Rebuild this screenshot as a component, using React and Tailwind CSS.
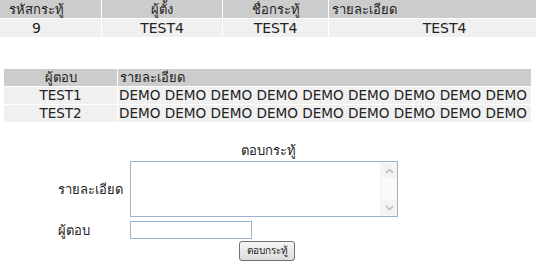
export default function App() {
  const font = { fontFamily: "Tahoma, 'DejaVu Sans', 'Noto Sans', sans-serif" };
  const demo = Array(9).fill("DEMO").join(" ");
  return (
    <div className="w-[536px] h-[263px] bg-white text-[#222] overflow-hidden relative" style={font}>
      {/* top table */}
      <div className="grid grid-cols-[101px_120px_105px_1fr] gap-x-px gap-y-px w-[536px] text-[13px]">
        <div className="h-[18px] bg-[#cccccc] flex items-center justify-center pr-[28px] leading-none">รหัสกระทู้</div>
        <div className="h-[18px] bg-[#cccccc] flex items-center justify-center leading-none">ผู้ตั้ง</div>
        <div className="h-[18px] bg-[#cccccc] flex items-center justify-center leading-none">ชื่อกระทู้</div>
        <div className="h-[18px] bg-[#cccccc] flex items-center pl-[3px] leading-none">รายละเอียด</div>
        <div className="h-[18px] bg-[#f0f0f0] flex items-center justify-center pr-[28px] text-[14px] leading-none">9</div>
        <div className="h-[18px] bg-[#f0f0f0] flex items-center justify-center text-[14px] leading-none">TEST4</div>
        <div className="h-[18px] bg-[#f0f0f0] flex items-center justify-center text-[14px] leading-none">TEST4</div>
        <div className="h-[18px] bg-[#f0f0f0] flex items-center justify-center pl-6 text-[14px] leading-none">TEST4</div>
      </div>

      {/* second table */}
      <div className="mt-[32px] ml-[4px] w-[527px] grid grid-cols-[113px_1fr] gap-px text-[13px]">
        <div className="h-[17px] bg-[#cccccc] flex items-center justify-center leading-none">ผู้ตอบ</div>
        <div className="h-[17px] bg-[#cccccc] flex items-center pl-[2px] leading-none">รายละเอียด</div>
        <div className="h-[17px] bg-[#f0f0f0] flex items-center justify-center text-[13.5px] leading-none">TEST1</div>
        <div className="h-[17px] bg-[#f0f0f0] flex items-center pl-[1px] text-[13.6px] leading-none whitespace-nowrap overflow-hidden">{demo}</div>
        <div className="h-[17px] bg-[#f0f0f0] flex items-center justify-center text-[13.5px] leading-none">TEST2</div>
        <div className="h-[17px] bg-[#f0f0f0] flex items-center pl-[1px] text-[13.6px] leading-none whitespace-nowrap overflow-hidden">{demo}</div>
      </div>

      {/* form */}
      <div className="mt-[20px] flex flex-col text-[13px]">
        <div className="h-[17px] flex items-center justify-center leading-none">ตอบกระทู้</div>
        <div className="mt-[2px] flex items-center">
          <div className="w-[130px] pl-[58px] leading-none">รายละเอียด</div>
          <div className="w-[268px] h-[56px] border border-[#9db3cc] bg-white flex justify-end">
            <div className="w-[17px] h-full bg-[#fafafa] border-l border-[#eeeeee] flex flex-col justify-between items-center py-px">
              <div className="w-[15px] h-[15px] bg-[#f3f3f3] flex items-center justify-center">
                <svg width="9" height="6" viewBox="0 0 9 6"><path d="M1 5 L4.5 1.5 L8 5" stroke="#b8b8b8" strokeWidth="1.3" fill="none" /></svg>
              </div>
              <div className="w-[15px] h-[15px] bg-[#f3f3f3] flex items-center justify-center">
                <svg width="9" height="6" viewBox="0 0 9 6"><path d="M1 1 L4.5 4.5 L8 1" stroke="#b8b8b8" strokeWidth="1.3" fill="none" /></svg>
              </div>
            </div>
          </div>
        </div>
        <div className="mt-[4px] flex items-center">
          <div className="w-[130px] pl-[58px] leading-none">ผู้ตอบ</div>
          <div className="w-[122px] h-[18px] border border-[#9db3cc] bg-white"></div>
        </div>
        <div className="mt-[2px] flex">
          <div className="ml-[239px] w-[56px] h-[20px] border border-[#707070] rounded-[3px] bg-gradient-to-b from-[#f6f6f6] to-[#dcdcdc] flex items-center justify-center text-[10px] leading-none">ตอบกระทู้</div>
        </div>
      </div>
    </div>
  );
}
